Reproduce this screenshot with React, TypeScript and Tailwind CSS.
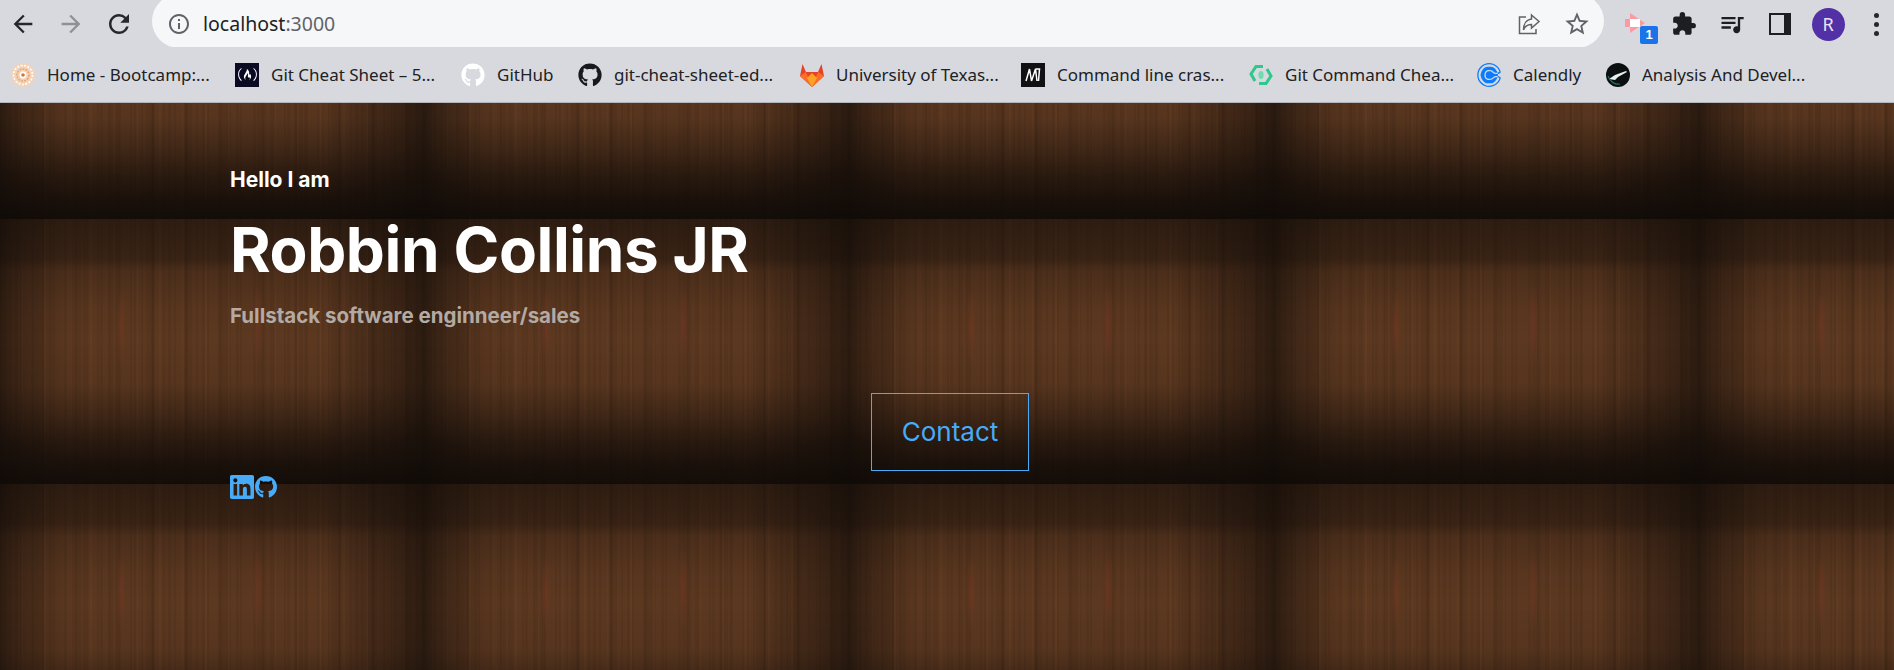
import React from "react";
import {
  MdArrowBack,
  MdArrowForward,
  MdRefresh,
  MdInfoOutline,
  MdStarBorder,
  MdExtension,
  MdQueueMusic,
} from "react-icons/md";
import { FaGithub, FaFreeCodeCamp } from "react-icons/fa";
import { SiLinkedin, SiCalendly } from "react-icons/si";

const HomeIcon = () => (
  <svg viewBox="0 0 24 24" className="w-6 h-6">
    <circle cx="12" cy="12" r="12" fill="#f3d3b8" />
    <circle cx="12" cy="12" r="9.5" fill="none" stroke="#fff" strokeWidth="1.6" strokeDasharray="2 1.5" />
    <circle cx="12" cy="12" r="6" fill="none" stroke="#e9a878" strokeWidth="1.6" strokeDasharray="2 1" />
    <circle cx="12" cy="12" r="3.4" fill="#fff" />
    <circle cx="12" cy="12" r="1.8" fill="#d9752f" />
  </svg>
);

const FccIcon = () => (
  <div className="w-6 h-6 bg-[#0a0a23] flex items-center justify-center text-white">
    <FaFreeCodeCamp className="w-[19px] h-[19px]" />
  </div>
);

const GitHubWhite = () => <FaGithub className="w-6 h-6 text-white" />;
const GitHubDark = () => <FaGithub className="w-6 h-6 text-[#17191c]" />;

const GitlabIcon = () => (
  <svg viewBox="0 0 24 24" className="w-6 h-6">
    <polygon points="12,24 0,13 2.5,1 6,9 18,9 21.5,1 24,13" fill="#e24329" />
    <polygon points="0,13 6,9 12,24" fill="#fc6d26" />
    <polygon points="24,13 18,9 12,24" fill="#fc6d26" />
    <polygon points="7,15 12,10 17,15 12,24" fill="#fca326" />
  </svg>
);

const MIcon = () => (
  <svg viewBox="0 0 24 24" className="w-6 h-6">
    <rect width="24" height="24" fill="#111113" />
    <path d="M5 18 L8.5 6 L10.5 18 L14.5 6 L16 18 M14.5 6 L18.5 6 L17.5 18" fill="none" stroke="#fff" strokeWidth="1.5" />
  </svg>
);

const GreenIcon = () => (
  <svg viewBox="0 0 24 24" className="w-6 h-6">
    <path d="M14 3.5 L7 3.5 L2 11 L6 18" fill="none" stroke="#2dc88a" strokeWidth="3" />
    <path d="M10 20.5 L17 20.5 L22 13 L18 6" fill="none" stroke="#2dc88a" strokeWidth="3" />
    <ellipse cx="12" cy="12" rx="2.6" ry="4" fill="#6fdcb0" />
  </svg>
);

const CalendlyIcon = () => <SiCalendly className="w-6 h-6 text-[#0b7cff]" />;

const GuitarIcon = () => (
  <svg viewBox="0 0 24 24" className="w-6 h-6">
    <circle cx="12" cy="12" r="12" fill="#0c0f10" />
    <path d="M3 16 L9 12 L20 8 L21 9 L12 14 L9 17 Z" fill="#e8efef" />
    <path d="M2 13 C4 19 9 22 14 21" fill="none" stroke="#1d6f6a" strokeWidth="1.2" />
  </svg>
);

const bookmarks = [
  { label: "Home - Bootcamp:...", icon: <HomeIcon />, width: "w-[224px]" },
  { label: "Git Cheat Sheet – 5...", icon: <FccIcon />, width: "w-[226px]" },
  { label: "GitHub", icon: <GitHubWhite />, width: "w-[117px]" },
  { label: "git-cheat-sheet-ed...", icon: <GitHubDark />, width: "w-[222px]" },
  { label: "University of Texas...", icon: <GitlabIcon />, width: "w-[221px]" },
  { label: "Command line cras...", icon: <MIcon />, width: "w-[228px]" },
  { label: "Git Command Chea...", icon: <GreenIcon />, width: "w-[228px]" },
  { label: "Calendly", icon: <CalendlyIcon />, width: "w-[129px]" },
  { label: "Analysis And Devel...", icon: <GuitarIcon />, width: "w-[200px]" },
];

const ToolbarSlot = ({ children }: { children: React.ReactNode }) => (
  <div className="w-12 h-12 flex items-center justify-center shrink-0">{children}</div>
);

export default function App() {
  return (
    <div className="h-screen flex flex-col overflow-hidden font-['Noto_Sans',sans-serif]">
      {/* Browser toolbar */}
      <div className="h-12 flex items-center bg-[#d8d9de] overflow-hidden shrink-0 -mb-px">
        <div className="flex -ml-px">
          <ToolbarSlot>
            <MdArrowBack className="w-[28px] h-[28px] text-[#25272a]" />
          </ToolbarSlot>
          <ToolbarSlot>
            <MdArrowForward className="w-[28px] h-[28px] text-[#8f9094]" />
          </ToolbarSlot>
          <ToolbarSlot>
            <MdRefresh className="w-[30px] h-[30px] text-[#25272a]" />
          </ToolbarSlot>
        </div>

        {/* Address bar */}
        <div className="ml-[9px] w-[1452px] h-[54px] -mt-[6px] shrink-0 rounded-[27px] bg-[#f6f7f9] flex items-center pt-[6px]">
          <MdInfoOutline className="ml-[15px] w-6 h-6 text-[#5f6368]" />
          <div className="ml-[12px] text-[19.5px] text-[#202124]">
            localhost<span className="text-[#5f6368]">:3000</span>
          </div>
          <svg viewBox="0 0 24 24" className="ml-auto w-6 h-6 fill-none stroke-[#5f6368] stroke-[1.5]">
            <path d="M9 5 H2.5 V21.5 H19 V17" />
            <path d="M14.5 3 L22 9.5 L14.5 16 V12.5 C10.5 12.5 8 14 6.5 18 C6.5 12 9.5 7.5 14.5 7 Z" />
          </svg>
          <MdStarBorder className="ml-[22px] mr-[13px] w-[28px] h-[28px] text-[#5f6368]" />
        </div>

        <div className="ml-2 flex">
          <ToolbarSlot>
            <div className="relative w-6 h-6">
              <svg viewBox="0 0 20 20" className="ml-px mt-px w-5 h-5">
                <polygon points="0,6 5,6 5,0 20,10 5,20 5,14 0,14" fill="#fb9aa2" />
                <rect x="5" y="6" width="10" height="8" fill="#fff" />
              </svg>
              <div className="absolute left-[16px] top-[14px] w-[18px] h-[18px] rounded-[2px] bg-[#1a73e8] text-white text-[13px] font-bold leading-[18px] text-center font-['Liberation_Sans',sans-serif]">
                1
              </div>
            </div>
          </ToolbarSlot>
          <ToolbarSlot>
            <MdExtension className="w-[26px] h-[26px] text-[#1d1e21]" />
          </ToolbarSlot>
          <ToolbarSlot>
            <MdQueueMusic className="w-[28px] h-[28px] text-[#1d1e21]" />
          </ToolbarSlot>
          <ToolbarSlot>
            <div className="w-[22px] h-[22px] border-2 border-[#1d1e21] border-r-[7px] bg-[#d8d9de]" />
          </ToolbarSlot>
          <ToolbarSlot>
            <div className="w-[33px] h-[33px] rounded-full bg-[#5230a5] text-[#e8e4f5] text-[18px] flex items-center justify-center">
              R
            </div>
          </ToolbarSlot>
          <ToolbarSlot>
            <div className="flex flex-col gap-[4px]">
              <div className="w-[5px] h-[5px] rounded-full bg-[#25272a]" />
              <div className="w-[5px] h-[5px] rounded-full bg-[#25272a]" />
              <div className="w-[5px] h-[5px] rounded-full bg-[#25272a]" />
            </div>
          </ToolbarSlot>
        </div>
      </div>

      {/* Bookmarks bar */}
      <div className="h-[56px] flex items-center pl-[11px] bg-[#d8d9de] border-b border-[#b4b5b9] shrink-0">
        {bookmarks.map((bookmark) => (
          <div key={bookmark.label} className={`${bookmark.width} flex items-center gap-[12px] shrink-0`}>
            <div className="w-6 h-6 shrink-0">{bookmark.icon}</div>
            <span className="text-[17px] text-[#202124] whitespace-nowrap">{bookmark.label}</span>
          </div>
        ))}
      </div>

      {/* Hero */}
      <div className="flex-1 pl-[230px] pr-[224px] pt-[65px] font-['Inter',sans-serif] bg-[#5c3820] bg-[size:425px_265px] bg-[position:-2px_-149px] bg-[radial-gradient(ellipse_5px_38px_at_123px_108px,rgba(115,55,35,.6),transparent),radial-gradient(ellipse_6px_42px_at_260px_105px,rgba(115,55,35,.55),transparent),linear-gradient(to_bottom,rgba(15,10,7,.6)_0,rgba(15,10,7,.46)_40px,rgba(15,10,7,.22)_52px,rgba(15,10,7,.05)_90px,rgba(15,10,7,0)_120px,rgba(15,10,7,.08)_165px,rgba(15,10,7,.36)_195px,rgba(15,10,7,.66)_222px,rgba(15,10,7,.88)_250px,rgba(15,10,7,.95)_265px),linear-gradient(to_right,rgba(15,10,7,.62)_0,rgba(15,10,7,.5)_8px,rgba(15,10,7,.34)_26px,rgba(15,10,7,.14)_48px,rgba(15,10,7,0)_75px,rgba(15,10,7,0)_325px,rgba(15,10,7,.16)_355px,rgba(15,10,7,.32)_385px,rgba(15,10,7,.46)_408px,rgba(15,10,7,.62)_425px),repeating-linear-gradient(90deg,rgba(0,0,0,.06)_0,rgba(0,0,0,.06)_2px,transparent_2px,transparent_11px),repeating-linear-gradient(90deg,rgba(0,0,0,.05)_0,rgba(0,0,0,.05)_3px,transparent_3px,transparent_17px),repeating-linear-gradient(90deg,rgba(255,170,110,.035)_0,rgba(255,170,110,.035)_2px,transparent_2px,transparent_23px),repeating-linear-gradient(90deg,rgba(0,0,0,.05)_0,rgba(0,0,0,.05)_9px,transparent_9px,transparent_37px)]">
        <p className="h-6 text-[21px] font-bold leading-6 text-white">Hello I am</p>
        <h1 className="mt-5 h-[75px] text-[62px] font-bold leading-[75px] text-white tracking-[-0.4px]">
          Robbin Collins JR
        </h1>
        <p className="mt-[14px] h-[30px] text-[20.5px] font-bold leading-[30px] text-[#b3aaa4]">
          Fullstack software enginneer/sales
        </p>

        <div className="mt-[62px] flex justify-center">
          <a className="w-[158px] h-[78px] pb-[2px] border border-[#47abf7] flex items-center justify-center text-[26px] text-[#47abf7]">
            Contact
          </a>
        </div>

        <div className="mt-[4px] flex items-center">
          <SiLinkedin className="w-6 h-6 text-[#47abf7]" />
          <FaGithub className="ml-px w-[22px] h-[24px] text-[#47abf7]" />
        </div>
      </div>
    </div>
  );
}
